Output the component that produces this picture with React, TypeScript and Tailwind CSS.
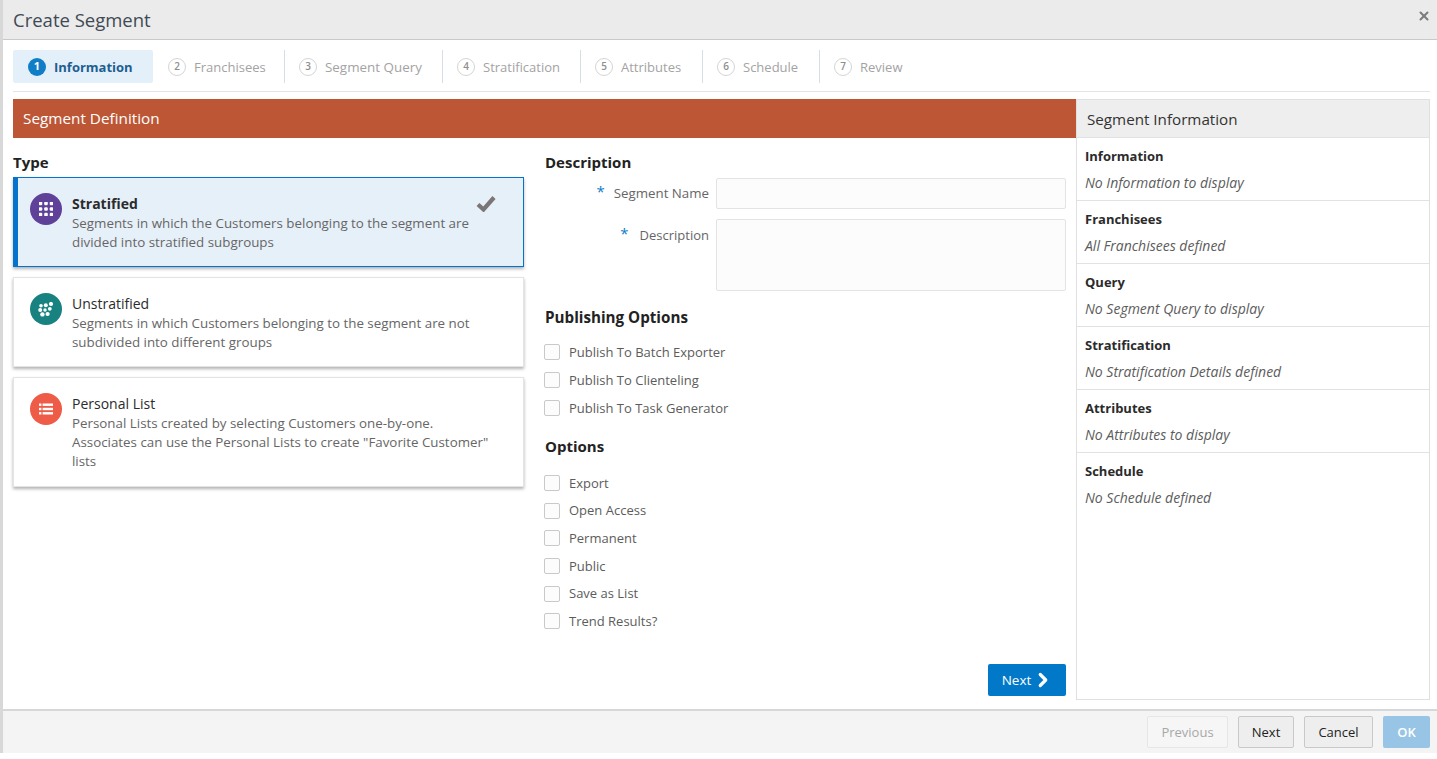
import { ChevronRight, X } from "lucide-react"

const font = "font-['Open_Sans','Noto_Sans',sans-serif]"

const steps = [
  { n: 2, label: "Franchisees", w: "w-[131px]", t: "text-[13px]" },
  { n: 3, label: "Segment Query", w: "w-[158px]", t: "text-[13.4px]" },
  { n: 4, label: "Stratification", w: "w-[138px]", t: "text-[13px]" },
  { n: 5, label: "Attributes", w: "w-[122px]", t: "text-[13px]" },
  { n: 6, label: "Schedule", w: "w-[117px]", t: "text-[13px]" },
  { n: 7, label: "Review", w: "w-[100px]", t: "text-[13px]" },
]

const summary = [
  { title: "Information", text: "No Information to display" },
  { title: "Franchisees", text: "All Franchisees defined" },
  { title: "Query", text: "No Segment Query to display" },
  { title: "Stratification", text: "No Stratification Details defined" },
  { title: "Attributes", text: "No Attributes to display" },
  { title: "Schedule", text: "No Schedule defined" },
]

function GridIcon() {
  return (
    <svg width="14" height="14" viewBox="0 0 14 14" fill="#fff">
      {[1.5, 7, 12.5].flatMap((y) =>
        [1.5, 7, 12.5].map((x) => <rect key={`${x}-${y}`} x={x - 1.8} y={y - 1.8} width="3.6" height="3.6" rx="1.2" />)
      )}
    </svg>
  )
}

function ScatterIcon() {
  return (
    <svg width="16" height="15" viewBox="0 0 16 15" fill="#fff">
      <circle cx="3" cy="3.8" r="1.8" />
      <circle cx="7.8" cy="3.2" r="2" />
      <circle cx="13" cy="2" r="2.1" />
      <circle cx="2.2" cy="8" r="2" />
      <circle cx="7" cy="8" r="1.7" />
      <circle cx="11.8" cy="6.8" r="1.9" />
      <circle cx="4.4" cy="12.4" r="2.2" />
      <circle cx="9.6" cy="12" r="2.1" />
    </svg>
  )
}

function ListIcon() {
  return (
    <svg width="14" height="12" viewBox="0 0 14 12" fill="#fff">
      <rect x="0" y="0.5" width="2.4" height="2.4" />
      <rect x="0" y="4.8" width="2.4" height="2.4" />
      <rect x="0" y="9.1" width="2.4" height="2.4" />
      <rect x="3.6" y="0.5" width="10.4" height="2.4" />
      <rect x="3.6" y="4.8" width="10.4" height="2.4" />
      <rect x="3.6" y="9.1" width="10.4" height="2.4" />
    </svg>
  )
}

function CheckRow({ label, h }: { label: string; h: string }) {
  return (
    <label className={`flex items-center ${h}`}>
      <span className="ml-[-1px] h-4 w-4 rounded-[2px] border border-[#c9c9c9] bg-[#fcfcfc]" />
      <span className="ml-[9px] text-[13px] leading-none text-[#5c5c5c]">{label}</span>
    </label>
  )
}

export default function App() {
  return (
    <div className={`${font} flex h-[759px] w-[1437px] flex-col overflow-hidden bg-white`}>
      <div className="flex h-[753px] flex-col border-l-[3px] border-[#d8d8d8]">
        <header className="flex h-[40px] shrink-0 items-center justify-between border-b border-[#c9c9c9] bg-[#ebebeb] pl-[10px] pr-[6px]">
          <h1 className="pt-[1px] text-[18.5px] font-normal text-[#3f4a55]">Create Segment</h1>
          <X size={14} strokeWidth={3.5} className="mb-[8px] text-[#7d7d7d]" />
        </header>

        <div className="flex min-h-0 flex-1 flex-col pl-[10px] pr-[7px]">
          <nav className="mt-[10px] flex h-[42px] shrink-0 border-b border-[#e4e4e4] pb-[8px]">
            <div className="flex w-[140px] items-center rounded-[2px] bg-[#e3f0fa] pl-[15px]">
              <span className="flex h-[18px] w-[18px] items-center justify-center rounded-full bg-[#0f7ec6] text-[11px] font-bold text-white">
                1
              </span>
              <span className="ml-[8px] pt-[2px] text-[13px] font-bold text-[#1d5f91]">Information</span>
            </div>
            {steps.map((s, i) => (
              <div
                key={s.n}
                className={`flex ${s.w} items-center ${i === 0 ? "ml-[1px]" : ""} pl-[14px] ${i < steps.length - 1 ? "border-r border-[#d6dfe6]" : ""}`}
              >
                <span className="flex h-[18px] w-[18px] items-center justify-center rounded-full border border-[#d5d5d5] text-[10px] font-semibold text-[#8e8e8e]">
                  {s.n}
                </span>
                <span className={`ml-[8px] whitespace-nowrap pt-[2px] ${s.t} text-[#a3a3a3]`}>{s.label}</span>
              </div>
            ))}
          </nav>

          <div className="mt-[7px] flex h-[601px] shrink-0">
            <main className="w-[1063px] shrink-0">
              <div className="flex h-[39px] items-center bg-[#bd5635] pl-[10px] text-[15.3px] text-white">
                Segment Definition
              </div>
              <div className="flex">
                <section className="w-[511px] shrink-0">
                  <h2 className="mt-[14px] h-[25px] text-[15px] font-bold leading-[20px] text-[#222]">Type</h2>

                  <div className="relative flex h-[90px] border border-[#0572ce] border-l-[5px] bg-[#e6f0f9] pl-[12px] pt-[15px] shadow-[0_2px_3px_rgba(0,0,0,0.3)]">
                    <span className="flex h-8 w-8 shrink-0 items-center justify-center rounded-full bg-[#5f4199]">
                      <GridIcon />
                    </span>
                    <div className="ml-[10px] mt-[1px]">
                      <div className="text-[14px] font-bold leading-[19px] text-[#2b2b2b]">Stratified</div>
                      <p className="w-[415px] pt-[1px] text-[13.35px] leading-[19px] text-[#666]">
                        Segments in which the Customers belonging to the segment are divided into stratified subgroups
                      </p>
                    </div>
                    <svg width="20" height="17" viewBox="0 0 20 17" className="absolute right-[27px] top-[17px]">
                      <path d="M2 9.5 L7.5 14.5 L18 2.5" fill="none" stroke="#7b7675" strokeWidth="4.2" />
                    </svg>
                  </div>

                  <div className="mt-[10px] flex h-[90px] border border-[#e4e4e4] bg-white pl-[16px] pt-[15px] shadow-[0_2px_3px_rgba(0,0,0,0.3)]">
                    <span className="flex h-8 w-8 shrink-0 items-center justify-center rounded-full bg-[#17827f]">
                      <ScatterIcon />
                    </span>
                    <div className="ml-[10px] mt-[1px]">
                      <div className="text-[14px] leading-[19px] text-[#2b2b2b]">Unstratified</div>
                      <p className="w-[415px] pt-[1px] text-[13.35px] leading-[19px] text-[#666]">
                        Segments in which Customers belonging to the segment are not subdivided into different groups
                      </p>
                    </div>
                  </div>

                  <div className="mt-[10px] flex h-[110px] border border-[#e4e4e4] bg-white pl-[16px] pt-[15px] shadow-[0_2px_3px_rgba(0,0,0,0.3)]">
                    <span className="flex h-8 w-8 shrink-0 items-center justify-center rounded-full bg-[#ee5b46]">
                      <ListIcon />
                    </span>
                    <div className="ml-[10px] mt-[1px]">
                      <div className="text-[14px] leading-[19px] text-[#2b2b2b]">Personal List</div>
                      <p className="w-[422px] pt-[1px] text-[13.35px] leading-[19px] text-[#666]">
                        Personal Lists created by selecting Customers one-by-one. Associates can use the Personal Lists to create "Favorite Customer" lists
                      </p>
                    </div>
                  </div>
                </section>

                <section className="ml-[21px] w-[521px] shrink-0">
                  <h2 className="mt-[14px] h-[26px] text-[15px] font-bold leading-[20px] text-[#222]">Description</h2>
                  <div className="flex h-[31px]">
                    <div className="flex w-[164px] justify-end pt-[6px] text-[13.3px] leading-[18px] text-[#666]">
                      <span className="mr-[9px] mt-[-2px] text-[15px] text-[#0f7ec6]">*</span>Segment Name
                    </div>
                    <div className="ml-[7px] flex-1 rounded-[2px] border border-[#e3e3e3] bg-[#fcfcfc]" />
                  </div>
                  <div className="mt-[10px] flex h-[72px]">
                    <div className="flex w-[164px] justify-end pt-[7px] text-[13px] leading-[18px] text-[#666]">
                      <span className="mr-[11px] mt-[-2px] text-[15px] text-[#0f7ec6]">*</span>Description
                    </div>
                    <div className="ml-[7px] flex-1 rounded-[2px] border border-[#e3e3e3] bg-[#fcfcfc]" />
                  </div>

                  <h2 className="mt-[16px] h-[20px] text-[15.2px] font-bold leading-[20px] text-[#222]">Publishing Options</h2>
                  <div className="mt-[11px]">
                    <CheckRow h="h-[28px]" label="Publish To Batch Exporter" />
                    <CheckRow h="h-[28px]" label="Publish To Clienteling" />
                    <CheckRow h="h-[28px]" label="Publish To Task Generator" />
                  </div>

                  <h2 className="mt-[14px] h-[20px] text-[15px] font-bold leading-[20px] text-[#222]">Options</h2>
                  <div className="mt-[13.5px]">
                    <CheckRow h="h-[27.6px]" label="Export" />
                    <CheckRow h="h-[27.6px]" label="Open Access" />
                    <CheckRow h="h-[27.6px]" label="Permanent" />
                    <CheckRow h="h-[27.6px]" label="Public" />
                    <CheckRow h="h-[27.6px]" label="Save as List" />
                    <CheckRow h="h-[27.6px]" label="Trend Results?" />
                  </div>

                  <div className="mt-[28.5px] flex justify-end">
                    <button className="flex h-[32px] w-[78px] items-center justify-center rounded-[2px] bg-[#0279c8] pl-[2px] text-[13.5px] text-white">
                      <span className="pt-[2px]">Next</span>
                      <ChevronRight size={22} strokeWidth={3.5} className="ml-[1px]" />
                    </button>
                  </div>
                </section>
              </div>
            </main>

            <aside className="w-[354px] shrink-0 border border-[#e0e0e0]">
              <div className="flex h-[38px] items-center border-b border-[#dfe3e6] bg-[#eeeeee] pl-[10px] pt-[2px] text-[15.2px] text-[#333]">
                Segment Information
              </div>
              {summary.map((s) => (
                <div key={s.title} className="h-[63px] border-b border-[#dfe3e6] pl-[8px] last:border-b-0">
                  <div className="pt-[9px] text-[13px] font-bold leading-[18px] text-[#2b2b2b]">{s.title}</div>
                  <div className="pt-[9px] text-[14px] italic leading-[18px] text-[#5c5c5c]">{s.text}</div>
                </div>
              ))}
            </aside>
          </div>
        </div>

        <footer className="flex h-[44px] shrink-0 items-center justify-end gap-[10px] border-t-2 border-[#d4d8db] bg-[#f4f4f4] pr-[7px]">
          <button className="h-[32px] w-[81px] rounded-[2px] border border-[#e6e6e6] bg-[#f6f6f6] pt-[2px] text-[13px] text-[#a8a8a8]">
            Previous
          </button>
          <button className="h-[32px] w-[56px] rounded-[2px] border border-[#c9c9c9] bg-[#eeeeee] pt-[2px] text-[13px] text-[#222]">
            Next
          </button>
          <button className="h-[32px] w-[69px] rounded-[2px] border border-[#c9c9c9] bg-[#eeeeee] pt-[2px] text-[13px] text-[#222]">
            Cancel
          </button>
          <button className="h-[32px] w-[47px] rounded-[2px] bg-[#98c5e6] pt-[2px] text-[13px] font-semibold text-white">
            OK
          </button>
        </footer>
      </div>
    </div>
  )
}
